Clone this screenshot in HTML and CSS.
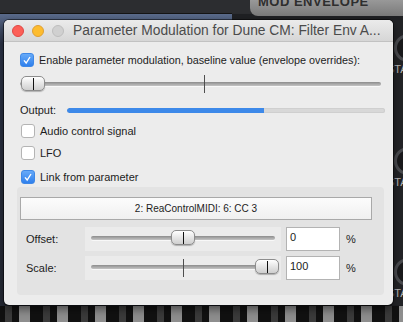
FILE: index.html
```html
<!DOCTYPE html>
<html lang="en">
<head>
  <meta charset="UTF-8">
  <title>Parameter Modulation</title>
  <link rel="stylesheet" href="styles.css">
</head>
<body>
  <!-- host plugin behind the dialog -->
  <div class="host">
    <div class="host-top"></div>
    <div class="host-blue"></div>
    <div class="host-env"><span>MOD ENVELOPE</span></div>
    <div class="host-side">
      <span class="knob k1"></span><span class="sta s1">STA</span>
      <span class="knob k2"></span><span class="sta s2">STA</span>
      <span class="knob k3"></span><span class="sta s3">STA</span>
    </div>
    <div class="host-keys"></div>
  </div>

  <div class="window">
    <div class="titlebar">
      <span class="light red"></span>
      <span class="light yellow"></span>
      <span class="light grey"></span>
      <span class="title">Parameter Modulation for Dune CM: Filter Env A...</span>
    </div>

    <div class="content">
      <label class="check-row first">
        <span class="box checked"><svg viewBox="0 0 14 14"><path d="M3.5 7.5 L6 10.5 L10.5 3.5" /></svg></span>
        Enable parameter modulation, baseline value (envelope overrides):
      </label>

      <div class="slider wide">
        <div class="track"></div>
        <div class="tick" style="left: 184px"></div>
        <div class="thumb" style="left: 1px"><i></i></div>
      </div>

      <div class="output-row">
        <span>Output:</span>
        <div class="meter"><div class="meter-fill" style="width: 62%"></div></div>
      </div>

      <label class="check-row">
        <span class="box"></span>
        Audio control signal
      </label>
      <label class="check-row spaced">
        <span class="box"></span>
        LFO
      </label>
      <label class="check-row last">
        <span class="box checked"><svg viewBox="0 0 14 14"><path d="M3.5 7.5 L6 10.5 L10.5 3.5" /></svg></span>
        Link from parameter
      </label>

      <div class="group">
        <button class="combo">2: ReaControlMIDI: 6: CC 3</button>

        <div class="param-row">
          <span class="param-label">Offset:</span>
          <div class="slider small">
            <div class="track"></div>
            <div class="thumb" style="left: 86px"><i></i></div>
          </div>
          <div class="num">0</div>
          <span class="pct">%</span>
        </div>

        <div class="param-row">
          <span class="param-label">Scale:</span>
          <div class="slider small">
            <div class="track"></div>
            <div class="tick" style="left: 98px"></div>
            <div class="thumb" style="left: 170px"><i></i></div>
          </div>
          <div class="num">100</div>
          <span class="pct">%</span>
        </div>
      </div>
    </div>
  </div>
</body>
</html>
```

FILE: styles.css
```css
body {
  margin: 0;
  width: 403px;
  height: 322px;
  overflow: hidden;
  background: #1f2023;
  font-family: "Liberation Sans", Arial, sans-serif;
  font-size: 11px;
  color: #1c1c1c;
  position: relative;
}

/* background plugin */
.host-top {
  position: absolute;
  left: 0;
  top: 0;
  width: 403px;
  height: 14px;
  background: #2c2d30;
}

.host-blue {
  position: absolute;
  left: 0;
  top: 13px;
  width: 232px;
  height: 300px;
  background: linear-gradient(180deg, #5a6b8c, #2c3448 30px, #262a35);
  border-top: 1px solid #151515;
}

.host-env {
  position: absolute;
  left: 250px;
  top: -4px;
  width: 170px;
  height: 20px;
  background: linear-gradient(180deg, #a0a0a0, #7a7a7a);
  border-bottom-left-radius: 8px;
}

.host-env span {
  position: absolute;
  left: 8px;
  top: -2px;
  font-size: 13px;
  font-weight: bold;
  letter-spacing: 0.5px;
  color: #2e2e2e;
}

.host-side {
  position: absolute;
  left: 390px;
  top: 20px;
  width: 13px;
  height: 285px;
  background: #232427;
}

.knob {
  position: absolute;
  left: 4px;
  width: 22px;
  height: 22px;
  border-radius: 50%;
  border: 3px solid #4a4b4f;
  background: #1a1a1c;
}

.k1 { top: 14px; }
.k2 { top: 127px; }
.k3 { top: 238px; }

.sta {
  position: absolute;
  left: -3px;
  font-size: 11px;
  color: #b8b8b8;
}

.s1 { top: 43px; }
.s2 { top: 156px; }
.s3 { top: 267px; }

.host-keys {
  position: absolute;
  left: 0;
  top: 306px;
  width: 403px;
  height: 16px;
  background: repeating-linear-gradient(90deg, #111 0 5px, #3b3b3b 5px 12px, #111 12px 19px, #8e8e8e 19px 30px, #111 30px 38px);
}

/* dialog */
.window {
  position: absolute;
  left: 4px;
  top: 20px;
  width: 389px;
  height: 285px;
  background: #ececec;
  border-radius: 5px;
  box-shadow: 0 0 0 1px rgba(0, 0, 0, 0.5), 0 4px 10px rgba(0, 0, 0, 0.5);
  overflow: hidden;
}

.titlebar {
  height: 21px;
  display: flex;
  align-items: center;
  padding-left: 8px;
  gap: 8px;
  background: linear-gradient(180deg, #ebebeb, #d6d6d6);
  border-bottom: 1px solid #c2c2c2;
}

.light {
  width: 12px;
  height: 12px;
  border-radius: 50%;
  box-sizing: border-box;
}

.red { background: #fc5f57; border: 1px solid #df4744; }
.yellow { background: #fdbc2e; border: 1px solid #de9f34; }
.grey { background: #d0d0d0; border: 1px solid #bdbdbd; }

.title {
  margin-left: 1px;
  font-size: 13.8px;
  color: #4b4b4b;
  white-space: nowrap;
}

.content {
  padding: 11px 0 0 16px;
}

.check-row {
  display: flex;
  align-items: center;
  gap: 5px;
  height: 14px;
  margin-bottom: 8px;
  margin-left: 1px;
  white-space: nowrap;
}

.check-row.first {
  margin-left: 0;
  margin-bottom: 8px;
  font-size: 10.8px;
}

.check-row.spaced {
  margin-bottom: 10px;
}

.check-row.last {
  margin-bottom: 3px;
}

.box {
  width: 14px;
  height: 14px;
  box-sizing: border-box;
  border: 1px solid #b4b4b4;
  border-radius: 3px;
  background: #fff;
  flex: none;
}

.box.checked {
  border-color: #3f88e6;
  background: linear-gradient(180deg, #67aaf8, #2f80ed);
}

.box svg {
  display: block;
  width: 12px;
  height: 12px;
}

.box path {
  fill: none;
  stroke: #fff;
  stroke-width: 1.6;
}

/* sliders */
.slider {
  position: relative;
  height: 18px;
}

.slider.wide {
  width: 361px;
  margin-bottom: 10px;
}

.track {
  position: absolute;
  left: 0;
  right: 0;
  top: 7px;
  height: 4px;
  border-radius: 2px;
  background: linear-gradient(180deg, #8c8c8c, #c4c4c4);
  box-shadow: 0 1px 0 #f8f8f8;
}

.tick {
  position: absolute;
  top: 0;
  width: 1px;
  height: 18px;
  background: #4e4e4e;
}

.thumb {
  position: absolute;
  top: 1px;
  width: 24px;
  height: 15px;
  box-sizing: border-box;
  border: 1px solid #8d8d8d;
  border-radius: 5px;
  background: linear-gradient(180deg, #ffffff, #e6e6e6 50%, #cfcfcf);
  box-shadow: 0 1px 1px rgba(0, 0, 0, 0.25);
}

.thumb i {
  position: absolute;
  left: 11px;
  top: 1px;
  width: 1px;
  height: 12px;
  background: #111;
}

.output-row {
  display: flex;
  align-items: center;
  gap: 11px;
  height: 14px;
  margin-bottom: 7px;
}

.meter {
  width: 318px;
  height: 5px;
  border-radius: 3px;
  background: #d8d8d8;
  box-shadow: inset 0 0 0 1px #cfcfcf;
  overflow: hidden;
}

.meter-fill {
  height: 100%;
  background: #3d89e9;
  border-radius: 3px 0 0 3px;
}

/* link group */
.group {
  margin-left: -3px;
  width: 367px;
  height: 108px;
  box-sizing: border-box;
  padding: 10px 12px 0 3px;
  background: #e3e3e3;
  border-radius: 4px;
}

.combo {
  display: block;
  width: 352px;
  height: 23px;
  margin: 0 0 7px;
  border: 1px solid #a9a9a9;
  background: linear-gradient(180deg, #fcfcfc, #f0f0f0);
  font-family: "Liberation Sans", Arial, sans-serif;
  font-size: 10px;
  color: #1c1c1c;
  padding: 0;
}

.param-row {
  display: flex;
  align-items: center;
  height: 24px;
  margin-bottom: 5px;
}

.param-label {
  width: 59px;
  padding-left: 6px;
}

.slider.small {
  width: 184px;
  height: 24px;
  padding: 0 6px;
  background: #ebebeb;
}

.slider.small .track {
  left: 6px;
  right: 6px;
  top: 9px;
}

.slider.small .tick {
  top: 3px;
  height: 18px;
}

.slider.small .thumb {
  top: 3px;
}

.num {
  margin-left: 5px;
  width: 54px;
  height: 24px;
  box-sizing: border-box;
  border: 1px solid #b3b3b3;
  background: #fff;
  padding: 3px 0 0 3px;
}

.pct {
  margin-left: 6px;
}
```
